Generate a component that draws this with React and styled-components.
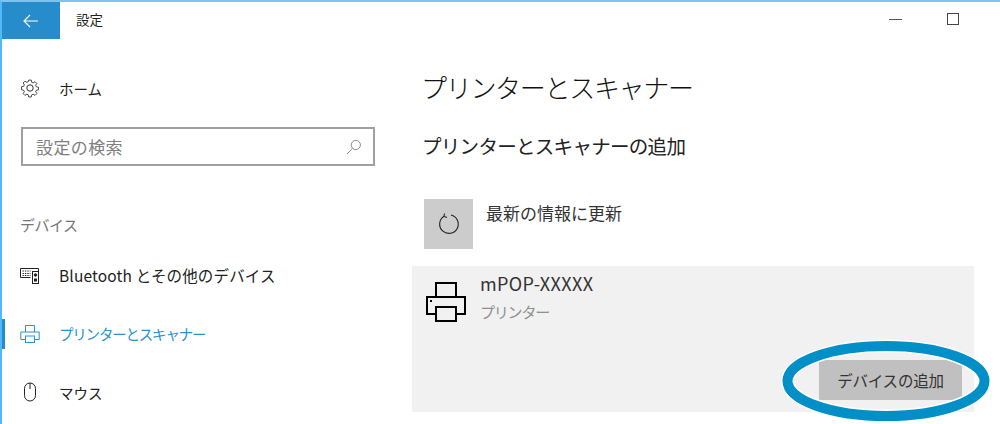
import styled, { createGlobalStyle } from "styled-components";

const GlobalStyle = createGlobalStyle`
  html, body {
    margin: 0;
    padding: 0;
    background: #fff;
  }
  * {
    box-sizing: border-box;
  }
`;

const Window = styled.div`
  width: 1000px;
  height: 424px;
  overflow: hidden;
  background: #fff;
  border-top: 2px solid #7fc4ee;
  border-left: 2px solid #4fb9fb;
  font-family: "Noto Sans CJK JP", "Noto Sans", sans-serif;
  color: #1f1f1f;
`;

const TitleBar = styled.div`
  height: 37px;
  display: flex;
  align-items: center;
`;

const BackButton = styled.div`
  width: 59px;
  height: 37px;
  margin-left: -1px;
  background: #278ccc;
  display: flex;
  align-items: center;
  justify-content: center;
`;

const TitleText = styled.div`
  margin-left: 16px;
  margin-bottom: 4px;
  font-size: 13.5px;
  flex: 1;
`;

const WindowControls = styled.div`
  display: flex;
  align-items: center;
  gap: 45px;
  margin-right: 41px;
  margin-bottom: 3px;
`;

const MinimizeIcon = styled.div`
  width: 13px;
  height: 1px;
  background: #555;
`;

const MaximizeIcon = styled.div`
  width: 12px;
  height: 12px;
  border: 1.5px solid #444;
`;

const Body = styled.div`
  display: grid;
  grid-template-columns: 410px 562px;
  height: 385px;
`;

const Sidebar = styled.div`
  display: flex;
  flex-direction: column;
  padding-top: 34px;
`;

const NavItem = styled.div`
  height: 30px;
  margin-left: -1px;
  padding-left: 15px;
  display: flex;
  align-items: center;
  gap: 19px;
  font-size: ${(p) => p.$size || "14.5px"};
  letter-spacing: ${(p) => p.$spacing || "0"};
  color: ${(p) => (p.$active ? "#2c90d2" : "#222")};
  border-left: 4px solid ${(p) => (p.$active ? "#278ccc" : "transparent")};
`;

const NavIconSlot = styled.span`
  width: 20px;
  height: 20px;
  display: flex;
  align-items: center;
  justify-content: center;
  flex-shrink: 0;
`;

const SearchBox = styled.div`
  width: 354px;
  height: 39px;
  margin: 24px 0 0 19px;
  border: 2px solid #a0a0a0;
  display: flex;
  align-items: center;
  justify-content: space-between;
  padding: 0 11px 0 13px;
  font-size: 17px;
  letter-spacing: 0.4px;
  color: #808080;
`;

const SectionLabel = styled.div`
  margin: 48px 0 24px 18px;
  height: 22px;
  line-height: 22px;
  font-size: 15px;
  letter-spacing: -0.5px;
  color: #777;
`;

const NavList = styled.div`
  display: flex;
  flex-direction: column;
  gap: 28.5px;
`;

const Main = styled.div`
  display: flex;
  flex-direction: column;
  position: relative;
`;

const Heading = styled.h1`
  margin: 27px 0 0 9px;
  height: 42px;
  line-height: 42px;
  font-size: 26px;
  font-weight: 300;
  letter-spacing: -1.3px;
  color: #111;
`;

const SubHeading = styled.h2`
  margin: 23px 0 0 10px;
  height: 30px;
  line-height: 30px;
  font-size: 19.5px;
  font-weight: 400;
  letter-spacing: -0.7px;
  color: #222;
`;

const RefreshRow = styled.div`
  display: flex;
  gap: 13px;
  margin: 38px 0 0 12px;
`;

const RefreshTile = styled.div`
  width: 49px;
  height: 50px;
  background: #cccccc;
  display: flex;
  align-items: center;
  justify-content: center;
`;

const RefreshLabel = styled.div`
  font-size: 17px;
  line-height: 27px;
  color: #333;
`;

const DeviceCard = styled.div`
  height: 146px;
  margin-top: 17px;
  background: #f1f1f1;
  display: flex;
  flex-direction: column;
  padding: 0 12px 12px 14px;
`;

const DeviceInfo = styled.div`
  display: flex;
  gap: 14px;
  padding-top: 6px;
`;

const DeviceIconSlot = styled.div`
  padding-top: 10px;
`;

const DeviceText = styled.div`
  display: flex;
  flex-direction: column;
`;

const DeviceName = styled.div`
  font-size: 18px;
  line-height: 24px;
  letter-spacing: 0.4px;
  margin-top: -1px;
  color: #333;
`;

const DeviceType = styled.div`
  margin-top: 6px;
  font-size: 15px;
  line-height: 22px;
  letter-spacing: -1.2px;
  color: #8f8f8f;
`;

const AddButton = styled.div`
  align-self: flex-end;
  margin-top: auto;
  width: 143px;
  height: 40px;
  background: #c0c0c0;
  display: flex;
  align-items: center;
  justify-content: center;
  font-size: 15.5px;
  letter-spacing: -0.2px;
  color: #333;
`;

const Highlight = styled.svg`
  position: absolute;
  left: 369px;
  top: 300px;
  width: 210px;
  height: 84px;
  overflow: visible;
`;

const GearIcon = () => (
  <svg width="20" height="20" viewBox="0 0 20 20" fill="none" stroke="#333" strokeWidth="1">
    <circle cx="10" cy="10" r="3.2" />
    <path d="M8.6 1.2h2.8l.5 2.4 1.6.7 2.1-1.3 2 2-1.3 2.1.7 1.6 2.4.5v2.8l-2.4.5-.7 1.6 1.3 2.1-2 2-2.1-1.3-1.6.7-.5 2.4H8.6l-.5-2.4-1.6-.7-2.1 1.3-2-2 1.3-2.1-.7-1.6-2.4-.5V8.6l2.4-.5.7-1.6-1.3-2.1 2-2 2.1 1.3 1.6-.7z" transform="translate(1 1) scale(.9)" />
  </svg>
);

const SearchIcon = () => (
  <svg width="16" height="16" viewBox="0 0 16 16" fill="none" stroke="#8a8a8a" strokeWidth="1">
    <circle cx="9.8" cy="6" r="4.6" />
    <path d="M6.5 9.3 1 15" />
  </svg>
);

const BluetoothIcon = () => (
  <svg width="20" height="20" viewBox="0 0 20 20" fill="none" stroke="#222" strokeWidth="1">
    <path d="M10.5 12.5H.5v-9h18v3" />
    <rect x="12.5" y="6.5" width="6" height="12" />
    <circle cx="15.5" cy="10" r="1.3" fill="#222" />
    <rect x="14.5" y="14" width="2" height="2" fill="#222" />
    <path d="M2.5 6h8M2.5 8.5h8M2.5 10.5h8" strokeDasharray="1.4 1" />
  </svg>
);

const PrinterIcon = () => (
  <svg width="20" height="20" viewBox="0 0 20 20" fill="none" stroke="#2c90d2" strokeWidth="1">
    <path d="M5.5 8V1.5h9V8" />
    <path d="M5 15.5H.8V8h18.4v7.5H15" />
    <rect x="5.5" y="12" width="9" height="6.5" />
  </svg>
);

const DevicePrinterIcon = () => (
  <svg width="40" height="40" viewBox="0 0 40 40" fill="none" stroke="#000" strokeWidth="2">
    <path d="M10 15V1h20v14" />
    <path d="M10 32H1V15h38v17h-9" />
    <rect x="10" y="25" width="20" height="14" />
    <rect x="4" y="18" width="2" height="2" fill="#000" stroke="none" />
  </svg>
);

const MouseIcon = () => (
  <svg width="20" height="20" viewBox="0 0 20 20" fill="none" stroke="#222" strokeWidth="1">
    <rect x="4.5" y="1" width="11" height="18" rx="5.5" />
    <path d="M10 1v6" />
  </svg>
);

export default function App() {
  return (
    <>
      <GlobalStyle />
      <Window>
        <TitleBar>
          <BackButton>
            <svg width="16" height="14" viewBox="0 0 16 14" fill="none" stroke="#fff" strokeWidth="1.2">
              <path d="M15 7H1M7 1 1 7l6 6" />
            </svg>
          </BackButton>
          <TitleText>設定</TitleText>
          <WindowControls>
            <MinimizeIcon />
            <MaximizeIcon />
          </WindowControls>
        </TitleBar>
        <Body>
          <Sidebar>
            <NavItem>
              <NavIconSlot>
                <GearIcon />
              </NavIconSlot>
              ホーム
            </NavItem>
            <SearchBox>
              設定の検索
              <SearchIcon />
            </SearchBox>
            <SectionLabel>デバイス</SectionLabel>
            <NavList>
              <NavItem $size="15.5px" $spacing="0.15px">
                <NavIconSlot>
                  <BluetoothIcon />
                </NavIconSlot>
                Bluetooth とその他のデバイス
              </NavItem>
              <NavItem $active $spacing="-1.2px">
                <NavIconSlot>
                  <PrinterIcon />
                </NavIconSlot>
                プリンターとスキャナー
              </NavItem>
              <NavItem>
                <NavIconSlot>
                  <MouseIcon />
                </NavIconSlot>
                マウス
              </NavItem>
            </NavList>
          </Sidebar>
          <Main>
            <Heading>プリンターとスキャナー</Heading>
            <SubHeading>プリンターとスキャナーの追加</SubHeading>
            <RefreshRow>
              <RefreshTile>
                <svg width="22" height="22" viewBox="0 0 22 22" fill="none" stroke="#222" strokeWidth="1.1">
                  <path d="M6 3.2A9.3 9.3 0 1 0 13 2" />
                  <path d="M6.5 .5 6 3.5l3 1" />
                </svg>
              </RefreshTile>
              <RefreshLabel>最新の情報に更新</RefreshLabel>
            </RefreshRow>
            <DeviceCard>
              <DeviceInfo>
                <DeviceIconSlot>
                  <DevicePrinterIcon />
                </DeviceIconSlot>
                <DeviceText>
                  <DeviceName>mPOP-XXXXX</DeviceName>
                  <DeviceType>プリンター</DeviceType>
                </DeviceText>
              </DeviceInfo>
              <AddButton>デバイスの追加</AddButton>
            </DeviceCard>
            <Highlight viewBox="0 0 210 84">
              <ellipse cx="105" cy="42" rx="98.5" ry="35" fill="none" stroke="#fff" strokeWidth="13" />
              <ellipse cx="105" cy="42" rx="98.5" ry="35" fill="none" stroke="#008fc6" strokeWidth="10" />
            </Highlight>
          </Main>
        </Body>
      </Window>
    </>
  );
}
